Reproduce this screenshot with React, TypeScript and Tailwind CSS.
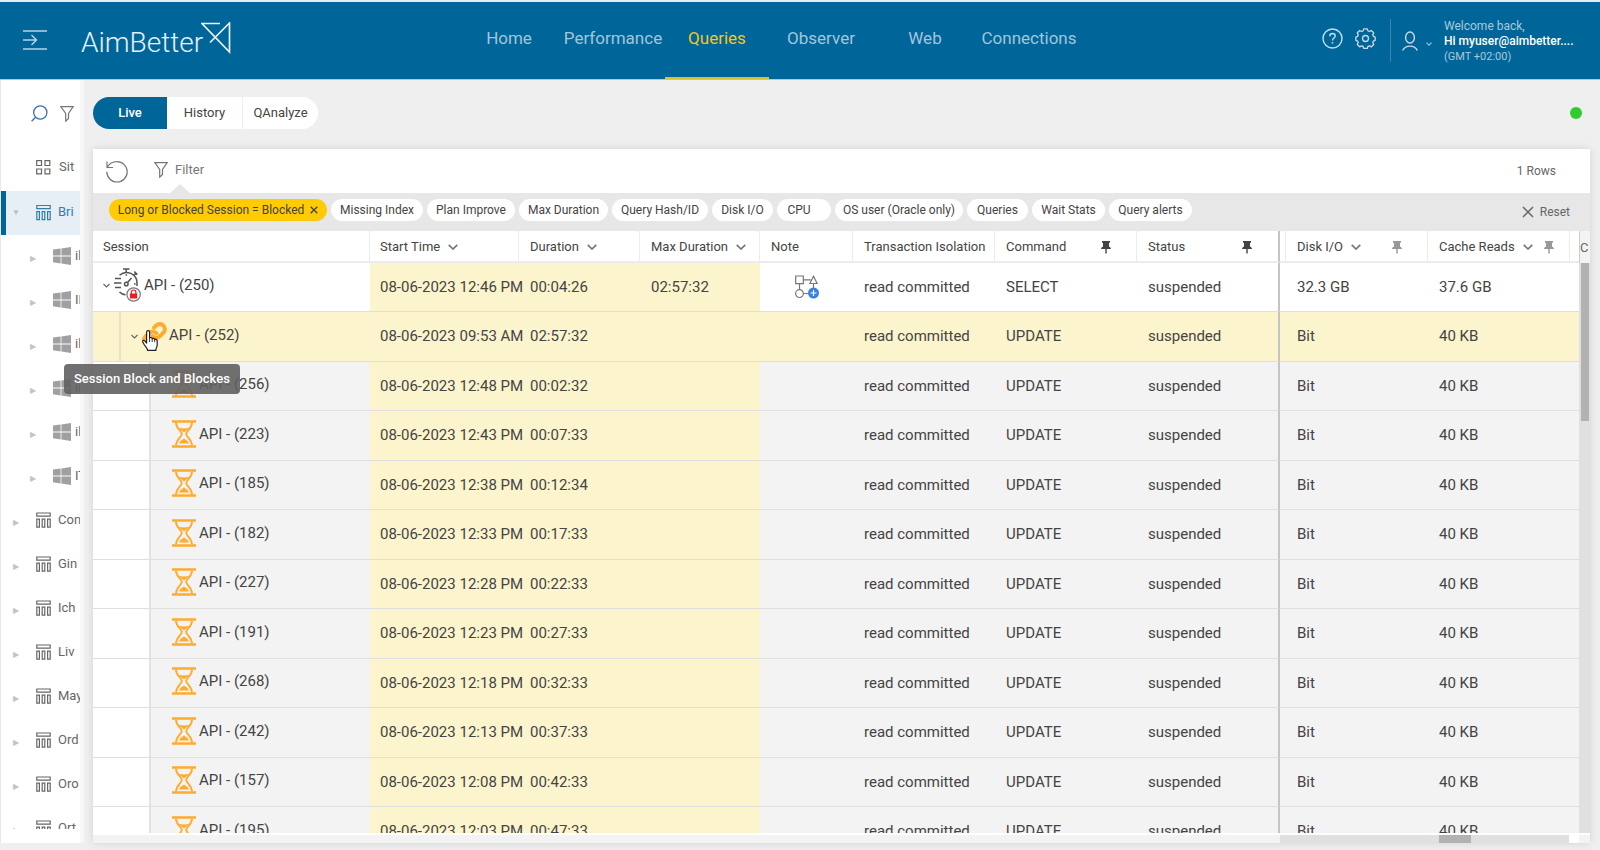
import React from "react";

type IconProps = { className?: string };

const MenuIcon = () => (
  <svg className="h-5 w-6" viewBox="0 0 24 20" fill="none" stroke="#b9d4e3" strokeWidth="1.4">
    <path d="M0 1h24M0 19h24M0 10h13M8.500 5l5 5-5 5" />
  </svg>
);

const LogoMark = () => (
  <svg className="h-8 w-[30px]" viewBox="0 0 30 32" fill="none" stroke="#e6f0f6" strokeWidth="1.7">
    <path d="M19 1.500H1l27.500 28.500V1L9 20.500" />
  </svg>
);

const HelpIcon = () => (
  <svg className="size-[21px]" viewBox="0 0 21 21" fill="none" stroke="#c8dde9" strokeWidth="1.4">
    <circle cx="10.500" cy="10.500" r="9.500" />
    <path d="M7.800 8.200c0-1.700 1.200-2.700 2.700-2.700s2.700 1 2.700 2.500c0 2-2.700 2.200-2.700 4.500" />
    <path d="M10.500 14v1.600" />
  </svg>
);

const GearIcon = () => (
  <svg className="size-[21px]" viewBox="0 0 24 24" fill="none" stroke="#c8dde9" strokeWidth="1.500" strokeLinejoin="round">
    <path d="M10 1h4l.8 2.300 1.700.7 2.200-1.100 2.700 2.700-1.100 2.200.7 1.700 2 .8v3.800l-2 .8-.7 1.700 1.100 2.200-2.700 2.700-2.200-1.100-1.700.7-.8 2.300h-4l-.8-2.300-1.700-.7-2.200 1.100-2.700-2.700 1.100-2.200-.7-1.700-2-.8v-3.800l2-.8.7-1.700-1.100-2.200 2.700-2.700 2.200 1.100 1.700-.7z" />
    <circle cx="12" cy="12" r="3.400" />
  </svg>
);

const UserIcon = () => (
  <svg className="h-5 w-4" viewBox="0 0 16 20" fill="none" stroke="#c8dde9" strokeWidth="1.4">
    <ellipse cx="8" cy="6.500" rx="4.400" ry="5.500" />
    <path d="M.7 19.500c1.300-3 4-4.400 7.300-4.400s6 1.400 7.300 4.400" />
  </svg>
);

const Chevron = ({ className = "" }: IconProps) => (
  <svg className={className} viewBox="0 0 10 6" fill="none" stroke="currentColor" strokeWidth="1.7">
    <path d="M.7.8 5 5 9.300.8" />
  </svg>
);

const SearchIcon = () => (
  <svg className="size-[17px]" viewBox="0 0 17 17" fill="none" stroke="#3a6fae" strokeWidth="1.300">
    <circle cx="9.300" cy="7.500" r="6.600" />
    <path d="M4.600 12.200.6 16.300" />
  </svg>
);

const Funnel = () => (
  <svg className="h-4 w-3.5" viewBox="0 0 14 16" fill="none" stroke="#777" strokeWidth="1.200">
    <path d="M.8.700h12.400L8.500 7.500v5L5.700 15.200V7.500z" />
  </svg>
);

const GridIcon = () => (
  <svg className="size-[15px]" viewBox="0 0 15 15" fill="none" stroke="#666" strokeWidth="1.200">
    <path d="M.7.7h4.800v4.800H.7zM9 .7h4.800v4.800H9zM.7 9h4.800v4.800H.7zM9 9h4.800v4.800H9z" />
  </svg>
);

const SiteIcon = ({ className = "" }: IconProps) => (
  <svg className={className} viewBox="0 0 15 16" fill="none" stroke="currentColor" strokeWidth="1.200">
    <path d="M.8 1h13.400v3.200H.8zM.8 7.200h2.600v8H.8zM6.200 7.200h2.600v8H6.200zM11.600 7.200h2.600v8h-2.600z" />
  </svg>
);

const WindowsIcon = () => (
  <svg className="size-[18px] shrink-0" viewBox="0 0 18 18" fill="#a0a0a0">
    <path d="M0 2.600 7.600 1.500v7H0zM8.400 1.400 18 0v8.500H8.400zM0 9.400h7.600v7L0 15.300zM8.400 9.400H18V18l-9.600-1.500z" />
  </svg>
);

const RefreshIcon = () => (
  <svg className="h-[23px] w-[22px]" viewBox="0 0 22 23" fill="none" stroke="#777" strokeWidth="1.200">
    <path d="M1 1.500v6h6M1.300 7.300C3.200 3.600 6.800 1.600 11 1.600c5.600 0 10.200 4.600 10.200 10.200S16.600 22 11 22 .8 17.400.8 11.800" />
  </svg>
);

const Cross = ({ className = "" }: IconProps) => (
  <svg className={className} viewBox="0 0 12 12" fill="none" stroke="currentColor">
    <path d="m1 1 10 10M11 1 1 11" />
  </svg>
);

const Pin = ({ className = "" }: IconProps) => (
  <svg className={className} viewBox="0 0 10 13" fill="currentColor">
    <path d="M1 0h8v1.800H8v3.700c1.200.5 1.900 1.400 2 2.600H5.700V12L5 13l-.7-1V8.100H0c.1-1.200.8-2.100 2-2.600V1.800H1z" />
  </svg>
);

const StopwatchIcon = () => (
  <svg className="h-[34px] w-[27px]" viewBox="0 0 27 34" fill="none" stroke="#555" strokeWidth="1.500">
    <path d="M9 1h6.500M12.200 1v4M19.500 7.500l2.500-2.500M20.300 3.600l3 3" />
    <path d="M5.500 7.200A10.500 10.500 0 0 1 23 15v3" />
    <path d="M5.500 24c2 2 4 2.700 6 2.800" />
    <path d="M1 10.500h6M0 15h7.500M1 19.500h6" />
    <path d="m13.300 14.700 4.200-4.700" />
    <circle cx="12.300" cy="16" r="1.800" />
    <path d="M12.300 6.200v1.600M20 16h1.600" />
    <circle cx="19.600" cy="26.500" r="6.700" fill="#fff" stroke="#777" strokeWidth="1.200" />
    <path d="M16 25.500h7.200v5H16z" fill="#ea1c24" stroke="none" />
    <path d="M17.300 26v-1.700a2.300 2.300 0 0 1 4.600 0V26" stroke="#ea1c24" strokeWidth="1.200" />
  </svg>
);

const LinkIcon = () => (
  <svg className="size-[25px]" viewBox="0 0 24 24" fill="none" stroke="#ffab2e" strokeWidth="3.800" strokeLinecap="round">
    <path d="M10 13.500a4.800 4.800 0 0 0 7 .3l3.800-3.800a4.900 4.900 0 0 0-6.900-6.900l-2.400 2.300" />
    <path d="M13.800 10.800a4.800 4.800 0 0 0-7-.3L3 14.300a4.900 4.900 0 0 0 6.900 6.900l2.300-2.300" />
  </svg>
);

const HandIcon = () => (
  <svg className="absolute left-0 top-2 h-[22px] w-4" viewBox="0 0 16 22" fill="#fff" stroke="#222" strokeWidth="1.200" strokeLinejoin="round">
    <path d="M4.600 13V2.200a1.500 1.500 0 0 1 3 0v6c.3-1.100 2.500-.9 2.600.6.500-.9 2.300-.6 2.500.8.600-.8 2.500-.3 2.500 1.300v4.300c0 1.500-1.400 2.700-1.400 5.200H5.600c0-2-2-3.600-3.300-5.700L.8 12c-.6-1.200.9-2.300 2-1.200z" />
    <path d="M7.600 8v4M10.200 9v3M12.700 10v2.200" fill="none" strokeWidth=".9" />
  </svg>
);

const Hourglass = () => (
  <svg className="h-7 w-6" viewBox="0 0 24 28" fill="none" stroke="#ffab2e">
    <path d="M0 1.500h24M0 26.500h24" strokeWidth="2.400" />
    <path d="M4 2.500C4 9 9.800 11 9.800 14S4 19 4 25.500M20 2.500C20 9 14.200 11 14.200 14S20 19 20 25.500" strokeWidth="1.900" />
    <path d="M7.200 7.800c3.200 1 6.400 1 9.600 0-1 2.400-3 3-4.800 4.700-1.800-1.700-3.800-2.300-4.800-4.700zM7 23.500c.8-2.700 3.200-3.300 5-5 1.800 1.700 4.200 2.300 5 5z" fill="#ffab2e" stroke="none" />
  </svg>
);

const NoteIcon = () => (
  <svg className="mx-auto h-6 w-6" viewBox="0 0 24 24" fill="none" stroke="#777" strokeWidth="1.200">
    <path d="M.7 1h7.600v7.600H.7zM8.300 4.800h7.500M4.500 8.600v6M8.500 18.500H14M18.500 8.600V14M18.500 1.300l3.600 7.200h-7.200z" />
    <circle cx="4.500" cy="18.600" r="3.900" />
    <circle cx="18.500" cy="18" r="5.500" fill="#3584e4" stroke="none" />
    <path d="M18.500 15v6M15.500 18h6" stroke="#fff" />
  </svg>
);

const nav = ["Home", "Performance", "Queries", "Observer", "Web", "Connections"];

const chips = [
  { label: "Missing Index", width: "w-[92px]" },
  { label: "Plan Improve", width: "w-[88px]" },
  { label: "Max Duration", width: "w-[89px]" },
  { label: "Query Hash/ID", width: "w-[96px]" },
  { label: "Disk I/O", width: "w-[61px]" },
  { label: "CPU", width: "w-[54px] pr-2.5" },
  { label: "OS user (Oracle only)", width: "w-[128px]" },
  { label: "Queries", width: "w-[61px]" },
  { label: "Wait Stats", width: "w-[73px]" },
  { label: "Query alerts", width: "w-[83px]" },
];

const servers = ["il", "IF", "il", "il", "il", "IT"];
const sites = ["Con", "Gin", "Ich", "Liv", "May", "Ord", "Oro", "Ort"];

type Row = { id: number; start: string; duration: string; max?: string; command: string; disk: string; cache: string };

const child = (id: number, time: string, duration: string): Row => ({
  id,
  start: `08-06-2023 ${time}`,
  duration,
  command: "UPDATE",
  disk: "Bit",
  cache: "40 KB",
});

const rows: Row[] = [
  { id: 250, start: "08-06-2023 12:46 PM", duration: "00:04:26", max: "02:57:32", command: "SELECT", disk: "32.3 GB", cache: "37.6 GB" },
  child(252, "09:53 AM", "02:57:32"),
  child(256, "12:48 PM", "00:02:32"),
  child(223, "12:43 PM", "00:07:33"),
  child(185, "12:38 PM", "00:12:34"),
  child(182, "12:33 PM", "00:17:33"),
  child(227, "12:28 PM", "00:22:33"),
  child(191, "12:23 PM", "00:27:33"),
  child(268, "12:18 PM", "00:32:33"),
  child(242, "12:13 PM", "00:37:33"),
  child(157, "12:08 PM", "00:42:33"),
  child(195, "12:03 PM", "00:47:33"),
];

type Column = { label: string; width: string; sort?: boolean; pin?: string; edge?: string };

const columns: Column[] = [
  { label: "Session", width: "w-[277px]" },
  { label: "Start Time", width: "w-[149px]", sort: true },
  { label: "Duration", width: "w-[121px]", sort: true },
  { label: "Max Duration", width: "w-[120px]", sort: true },
  { label: "Note", width: "w-[93px]" },
  { label: "Transaction Isolation", width: "w-[142px]" },
  { label: "Command", width: "w-[142px]", pin: "mr-[25px] text-[#444]" },
  { label: "Status", width: "w-[143px]", pin: "mr-[26px] text-[#444]", edge: "border-r-2 border-r-[#c4c4c4]" },
  { label: "", width: "w-[6px]" },
  { label: "Disk I/O", width: "w-[142px]", sort: true, pin: "mr-[25px] text-[#999]" },
  { label: "Cache Reads", width: "w-[142px]", sort: true, pin: "mr-[15px] text-[#999]" },
  { label: "", width: "", edge: "border-r-0" },
];

function Header() {
  return (
    <header className="flex h-20 shrink-0 items-stretch border-b border-t-2 border-b-[#a9cbdd] border-t-[#e4edf2] bg-[#006699]">
      <div className="flex w-[457px] shrink-0 items-center pb-px pl-[23px]">
        <button aria-label="Expand menu"><MenuIcon /></button>
        <a href="#home" className="ml-[34px] flex items-center text-[28px] font-light leading-8 text-[#e6f0f6]">
          <span className="pt-1.5">AimBetter</span>
          <span className="-ml-0.5 -mt-1"><LogoMark /></span>
        </a>
      </div>
      <nav className="flex">
        {nav.map((n) => (
          <a
            key={n}
            href={`#${n.toLowerCase()}`}
            className={`flex w-[104px] items-center justify-center border-b-2 pb-0.5 text-[17px] ${
              n === "Queries" ? "border-[#d9c127] text-[#f5c518]" : "border-transparent text-[#a3c5d9]"
            }`}
          >
            {n}
          </a>
        ))}
      </nav>
      <div className="ml-auto flex items-center">
        <button aria-label="Help" className="pb-1"><HelpIcon /></button>
        <button aria-label="Settings" className="ml-3 pb-1"><GearIcon /></button>
        <div className="ml-3.5 h-[43px] w-px bg-[#3a86ae]" />
        <button className="flex items-center" aria-label="Account">
          <span className="ml-[11px]"><UserIcon /></span>
          <Chevron className="ml-2 mt-1.5 h-1 w-1.5 text-[#a3c5d9]" />
        </button>
        <div className="ml-3 mr-3 w-[144px] whitespace-nowrap pt-0.5 text-[12px] leading-[15px] text-[#a9c9da]">
          <div>Welcome back,</div>
          <div className="font-medium text-white">Hi myuser@aimbetter....</div>
          <div className="text-[11px]">(GMT +02:00)</div>
        </div>
      </div>
    </header>
  );
}

function Sidebar() {
  return (
    <aside className="flex w-[84px] shrink-0 flex-col overflow-hidden border-l border-r-4 border-l-[#e9e9e9] border-r-[#f7f7f7] bg-white pb-3.5 text-[13px] text-[#666]">
      <div className="flex h-[67px] shrink-0 items-center gap-3 pl-[30px]">
        <button aria-label="Search"><SearchIcon /></button>
        <button aria-label="Filter sites"><Funnel /></button>
      </div>
      <ul className="min-h-0 flex-1 overflow-hidden whitespace-nowrap">
        <li className="flex h-11 items-center gap-2 pb-1 pl-[35px]"><GridIcon />Sit</li>
        <li className="flex h-11 items-center border-l-[5px] border-[#006699] bg-[#e6eff5] pb-0.5 pl-1.5 text-[#2f7fae]">
          <span className="w-6 shrink-0 pt-0.5 text-[8px] text-[#bbb]">▼</span>
          <SiteIcon className="mr-[7px] h-[17px] w-[15px] shrink-0" />
          Bri
        </li>
        {servers.map((s, i) => (
          <li key={i} className="flex h-11 items-center pb-0.5 pl-[29px]">
            <span className="w-[23px] shrink-0 pt-1.5 text-[8px] text-[#c4c4c4]">▶</span>
            <WindowsIcon />
            <span className="ml-1">{s}</span>
          </li>
        ))}
        {sites.map((s) => (
          <li key={s} className="flex h-11 items-center pb-0.5 pl-3">
            <span className="w-[23px] shrink-0 pt-1.5 text-[8px] text-[#c4c4c4]">▶</span>
            <SiteIcon className="mr-[7px] h-4 w-[15px] shrink-0" />
            {s}
          </li>
        ))}
      </ul>
    </aside>
  );
}

function SessionCell({ id, index }: { id: number; index: number }) {
  const height = "flex h-12 items-center group-even:h-[49px]";
  if (index === 0)
    return (
      <div className={`${height} pb-1 pl-2.5`}>
        <Chevron className="h-[5px] w-[7px] text-[#666]" />
        <span className="ml-1"><StopwatchIcon /></span>
        <span className="ml-[3px]">API - ({id})</span>
      </div>
    );
  if (index === 1)
    return (
      <div className={height}>
        <div className="h-full w-7 border-r-2 border-[#e8e1c0]" />
        <Chevron className="ml-2.5 h-[5px] w-[7px] text-[#666]" />
        <span className="relative ml-1 cursor-pointer pb-1"><LinkIcon /><HandIcon /></span>
        <span className="ml-0.5 pb-0.5">API - ({id})</span>
      </div>
    );
  return (
    <div className={height}>
      <div className="h-full w-[58px] border-r-2 border-[#e2e2e2] bg-white" />
      <span className="ml-[21px] pb-1"><Hourglass /></span>
      <span className="ml-[3px] pb-[3px]">API - ({id})</span>
    </div>
  );
}

function SessionsTable() {
  return (
    <table className="w-full table-fixed border-separate border-spacing-0 whitespace-nowrap text-left text-[15px] text-[#444]">
      <thead>
        <tr className="h-8 text-[13px]">
          {columns.map((c, i) => (
            <th key={i} className={`border-b-2 border-r border-[#ececec] p-0 font-normal ${c.width} ${c.edge ?? ""}`}>
              {c.label && (
                <div className={`flex items-center pt-0.5 ${i > 1 ? "pl-[11px]" : "pl-2.5"}`}>
                  {c.label}
                  {c.sort && <Chevron className="ml-2 h-1.5 w-2.5 text-[#777]" />}
                  {c.pin && (
                    <button aria-label={`Pin ${c.label}`} className={`ml-auto ${c.pin}`}>
                      <Pin className="h-[13px] w-2.5" />
                    </button>
                  )}
                </div>
              )}
            </th>
          ))}
        </tr>
      </thead>
      <tbody>
        {rows.map((r, i) => {
          const bg = i === 0 ? "bg-white" : i === 1 ? "bg-[#fcf4cd]" : "bg-[#f3f3f3]";
          return (
            <tr key={r.id} className={`group *:border-b *:border-[#dfdfdf] *:p-0 ${bg}`}>
              <td><SessionCell id={r.id} index={i} /></td>
              <td className="bg-[#fcf4cd]"><div className="pl-2.5">{r.start}</div></td>
              <td className="bg-[#fcf4cd]"><div className="pl-[11px]">{r.duration}</div></td>
              <td className="bg-[#fcf4cd]"><div className="pl-[11px]">{r.max}</div></td>
              <td>{i === 0 && <NoteIcon />}</td>
              <td><div className="pl-[11px]">read committed</div></td>
              <td><div className="pl-[11px]">{r.command}</div></td>
              <td className="border-r-2 border-r-[#c4c4c4]!"><div className="pl-[11px]">suspended</div></td>
              <td />
              <td><div className="pl-[11px]">{r.disk}</div></td>
              <td><div className="pl-[11px]">{r.cache}</div></td>
              <td />
            </tr>
          );
        })}
      </tbody>
    </table>
  );
}

function Panel() {
  return (
    <section className="flex min-h-0 flex-1 flex-col bg-white shadow-[0_0_8px_rgba(0,0,0,0.12)]">
      <div className="flex h-11 shrink-0 items-stretch pl-[13px] pr-[34px] text-[13px] text-[#777]">
        <button aria-label="Refresh"><RefreshIcon /></button>
        <div className="relative ml-[26px] flex items-center pb-0.5">
          <button className="flex items-center gap-[7px]"><Funnel />Filter</button>
          <div className="absolute bottom-0 left-4 h-0 w-0 border-x-10 border-b-9 border-x-transparent border-b-[#e7e7e7]" />
        </div>
        <span className="ml-auto self-center text-[12px] text-[#666]">1 Rows</span>
      </div>
      <div className="flex h-[38px] shrink-0 items-center gap-1 bg-[#e7e7e7] pb-1 pl-4 pr-5 text-[12px] text-[#444]">
        <button className="flex h-[22px] w-[218px] shrink-0 items-center justify-center gap-1.5 whitespace-nowrap rounded-full bg-[#ffcb05]">
          Long or Blocked Session = Blocked
          <Cross className="size-2 stroke-2" />
        </button>
        {chips.map((c) => (
          <button key={c.label} className={`h-[22px] shrink-0 whitespace-nowrap rounded-full bg-white ${c.width}`}>
            {c.label}
          </button>
        ))}
        <button className="ml-auto flex items-center gap-1.5 pt-1 text-[#666]">
          <Cross className="size-3 stroke-[1.5]" />
          Reset
        </button>
      </div>
      <div className="flex min-h-0 flex-1 overflow-hidden border-b-2 border-white">
        <div className="min-w-0 flex-1 overflow-hidden"><SessionsTable /></div>
        <div className="flex w-[11px] shrink-0 flex-col bg-[#e0e0e0]">
          <div className="flex h-8 items-center overflow-hidden border-l border-[#ccc] bg-[#f3f3f3] pt-0.5 text-[13px] text-[#666]">C</div>
          <div className="ml-0.5 mr-px h-[158px] bg-[#b2b2b2]" />
        </div>
      </div>
      <div className="flex h-2 shrink-0 bg-[#f3f3f3] pr-[11px]">
        <div className="ml-auto flex w-[289px] bg-[#e0e0e0] pl-[159px]">
          <div className="w-8 bg-[#b2b2b2]" />
        </div>
        <div className="w-2.5 bg-white" />
      </div>
    </section>
  );
}

export default function App() {
  return (
    <div className="relative flex h-screen flex-col overflow-hidden bg-[#efefef] font-['Roboto',sans-serif]">
      <Header />
      <div className="flex min-h-0 flex-1 pb-[7px]">
        <Sidebar />
        <main className="flex min-w-0 flex-1 flex-col pl-[9px] pr-2.5">
          <div className="flex h-[69px] shrink-0 items-center justify-between pb-1">
            <div className="flex h-8 overflow-hidden rounded-full bg-white text-[13px] text-[#444]">
              <button className="w-[74px] bg-[#006699] font-medium text-white">Live</button>
              <button className="w-[76px] border-r border-[#eee]">History</button>
              <button className="w-[75px]">QAnalyze</button>
            </div>
            <span className="mr-2 size-3 rounded-full bg-[#2ecc2e]" />
          </div>
          <Panel />
        </main>
      </div>
      <div role="tooltip" className="absolute left-16 top-[364px] flex h-[30px] items-center rounded bg-[#616161]/90 px-2.5 text-[13px] font-medium text-white">
        Session Block and Blockes
      </div>
    </div>
  );
}
